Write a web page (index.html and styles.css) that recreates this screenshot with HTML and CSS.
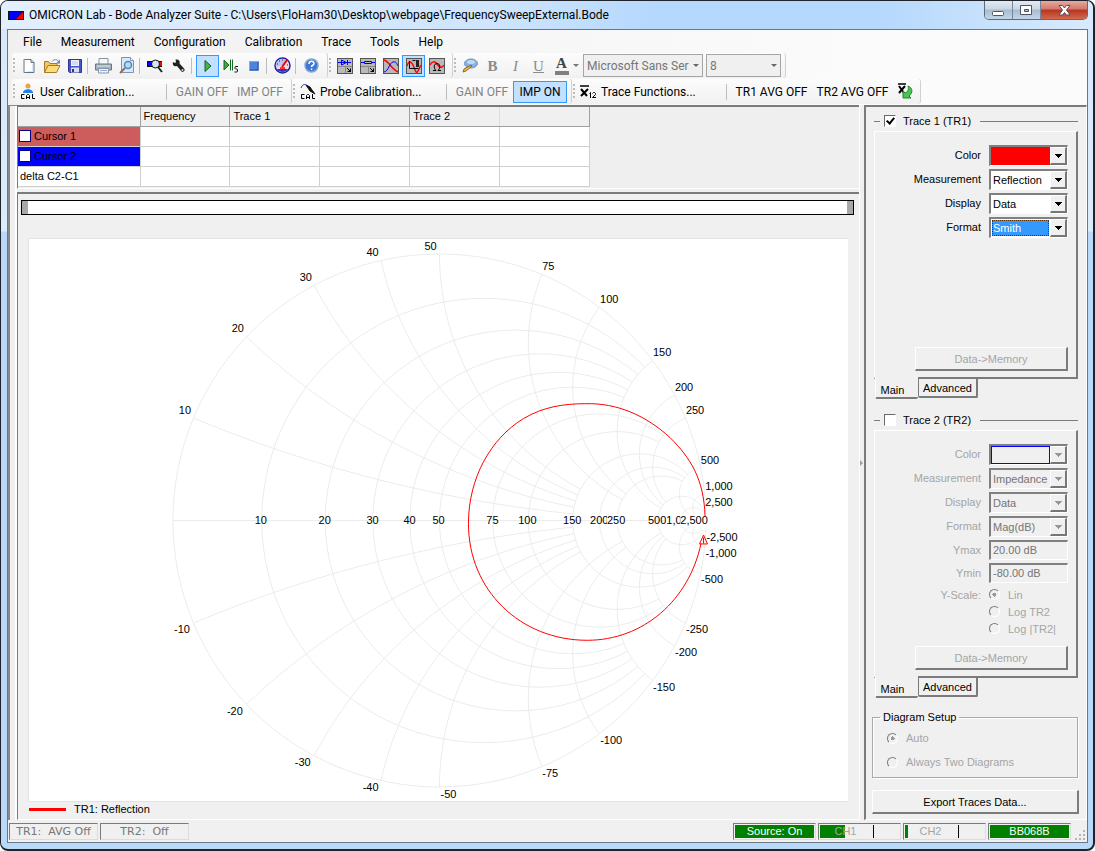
FILE: index.html
```html
<!DOCTYPE html>
<html lang="en">

<head>
    <meta charset="UTF-8">
    <meta name="viewport" content="width=device-width, initial-scale=1.0">
    <title>OMICRON Lab - Bode Analyzer Suite</title>
    <link rel="stylesheet" href="styles.css">
</head>

<body>

    <div class="window">
        <header class="titlebar">
            <svg class="app-icon" width="16" height="9" viewBox="0 0 16 9">
                <rect width="16" height="9" fill="#111"/>
                <path d="M1 1h13L8 8H1z" fill="#00f"/>
                <path d="M15 1v7H8z" fill="#f00"/>
            </svg>
            <h1 class="title">OMICRON Lab - Bode Analyzer Suite - C:\Users\FloHam30\Desktop\webpage\FrequencySweepExternal.Bode</h1>
            <div class="window-buttons">
                <button class="win-btn" aria-label="Minimize">
                    <svg width="13" height="11" viewBox="0 0 13 11"><rect x=".5" y="6.500" width="11" height="4" rx="1" fill="#fff" stroke="#4b5563"/></svg>
                </button>
                <button class="win-btn" aria-label="Maximize">
                    <svg width="13" height="11" viewBox="0 0 13 11"><path d="M.5.5h11v9H.5zM4.500 4.500v2h4v-2z" fill="#fff" fill-rule="evenodd" stroke="#4b5563"/></svg>
                </button>
                <button class="win-btn close" aria-label="Close">
                    <svg width="13" height="11" viewBox="0 0 13 11"><path d="M1 .5h3.500l2 2.500 2-2.500H12L8.500 5l3.500 5H8.500l-2-2.500-2 2.500H1l3.500-5z" fill="#fff" stroke="#5a4a5a"/></svg>
                </button>
            </div>
        </header>

        <div class="client">
            <nav class="menubar">
                <button>File</button>
                <button>Measurement</button>
                <button>Configuration</button>
                <button>Calibration</button>
                <button>Trace</button>
                <button>Tools</button>
                <button>Help</button>
            </nav>

            <div class="toolbar">
                <div class="strip">
                    <button class="tool" aria-label="New"><svg width="16" height="16" viewBox="0 0 16 16"><path d="M3 1.500h7l3 3v10H3z" fill="#fff" stroke="#5d7187"/><path d="M3 1v13.500" stroke="#a9bccb"/><path d="M10 1.500v3h3" fill="#c9dae8" stroke="#5d7187"/><path d="M11.500 6v7.500H6" fill="none" stroke="#dce7ef"/></svg></button>
                    <button class="tool" aria-label="Open"><svg width="18" height="16" viewBox="0 0 18 16"><path d="M1.500 14.500v-11h4l1.500 2h7v4" fill="#f4c75c" stroke="#a9792b"/><path d="M1.500 14.500l3.500-7h12l-3.500 7z" fill="#fbdc7a" stroke="#a9792b"/><path d="M9 3.500c2-2.500 5-2.500 6.500 0" fill="none" stroke="#6482a8"/><path d="M17 1.500v4h-4z" fill="#6482a8"/></svg></button>
                    <button class="tool" aria-label="Save"><svg width="16" height="16" viewBox="0 0 16 16"><path d="M1.500 1.500h13v13h-12l-1-1z" fill="#4655c4" stroke="#30378d"/><rect x="4" y="2" width="8" height="6" fill="#f0f3fd"/><path d="M5 4h6M5 6h6" stroke="#b9c2e3"/><path d="M4 14.500v-5h8v5z" fill="#d8dcef"/><rect x="5" y="11" width="2" height="3" fill="#30378d"/></svg></button>
                    <span class="sep"></span>
                    <button class="tool" aria-label="Print"><svg width="17" height="16" viewBox="0 0 17 16"><path d="M4 6V.5h9V6" fill="#f4f8fc" stroke="#8796a5"/><path d="M.5 6h16v6H.5z" fill="#a5b0ba" stroke="#697783"/><path d="M2 8h13" stroke="#dfe5ea"/><path d="M3.500 10.500h10v4.500h-10z" fill="#eef4fa" stroke="#8796a5"/><path d="M5 12.500h7" stroke="#8fb0d6"/></svg></button>
                    <button class="tool" aria-label="Print preview"><svg width="16" height="17" viewBox="0 0 16 17"><path d="M2.500.5h9l3 3v12h-12z" fill="#d9e9f9" stroke="#7c95b4"/><path d="M11.500.5v3h3" fill="#fff" stroke="#7c95b4"/><circle cx="9" cy="8" r="3.500" fill="#b5dcf6" stroke="#5588bc" stroke-width="1.500"/><path d="M6 11l-5 5" stroke="#976f4e" stroke-width="2"/></svg></button>
                    <span class="sep"></span>
                    <button class="tool" aria-label="Search device"><svg width="17" height="15" viewBox="0 0 17 15"><rect x="0" y="3" width="15" height="6" fill="#111"/><rect x="1" y="4" width="4" height="4" fill="#00f"/><rect x="12" y="4" width="3" height="4" fill="#f00"/><circle cx="8.500" cy="6" r="4" fill="#d5e7f2" stroke="#111"/><path d="M11 9l4 5" stroke="#222" stroke-width="2"/></svg></button>
                    <button class="tool" aria-label="Settings"><svg width="14" height="14" viewBox="0 0 14 14"><path d="M1 3l2 1 1-1-.500-2.500c3-.500 5 1.500 4 4l5 5.500c.500 2-1 3.500-3 2.500L5 7C2 8 0 6 1 3z" fill="#222"/><circle cx="10.500" cy="11" r="1" fill="#ddd"/></svg></button>
                    <span class="sep"></span>
                    <button class="tool active" aria-label="Continuous measurement"><svg width="12" height="14" viewBox="0 0 12 14"><path d="M3 1.500l6 5.500-6 5.500z" fill="#4cb04c" stroke="#12641d"/></svg></button>
                    <button class="tool" aria-label="Single measurement"><svg width="16" height="16" viewBox="0 0 16 16"><path d="M1 2l5 5-5 5z" fill="#3fa648" stroke="#166a20"/><path d="M7.500 1.500v11M9.500 1.500v11" stroke="#166a20"/><path d="M15 8.500h-2.500l-.5.500v1.500l.5.500h1.500l.5.500v2l-.5.500h-2.500" fill="none" stroke="#111"/></svg></button>
                    <button class="tool" aria-label="Stop"><svg width="10" height="10" viewBox="0 0 10 10"><rect x=".5" y=".5" width="9" height="9" fill="#4b84dc" stroke="#8aa9d8"/><path d="M1 9h8V1" fill="none" stroke="#24509e"/></svg></button>
                    <span class="sep"></span>
                    <button class="tool" aria-label="Signal level"><svg width="17" height="17" viewBox="0 0 17 17"><circle cx="8.500" cy="8.500" r="7.500" fill="#fbd5da" stroke="#2020a0" stroke-width="1.500"/><path d="M2 10a6.500 6.500 0 0 1 10-7l-3 5z" fill="#b9c5f8"/><path d="M3 12h11a6.500 6.500 0 0 1-11 0z" fill="#2838c0"/><path d="M8 10l5-7" stroke="#e00" stroke-width="2"/><path d="M3 7h1M5 4h1M8 3h1M14 8h-1" stroke="#222"/><path d="M6 11h5" stroke="#f33" stroke-width="2"/></svg></button>
                    <span class="sep"></span>
                    <button class="tool" aria-label="Help"><svg width="15" height="15" viewBox="0 0 15 15"><circle cx="7.500" cy="7.500" r="6.500" fill="#3d78d4" stroke="#8ca5cf" stroke-width="1.500"/><path d="M5 6c0-3.500 5-3.500 5-.500 0 2-2.500 1.500-2.500 3.500M7.500 10.500v1.500" fill="none" stroke="#fff" stroke-width="1.500"/></svg></button>
                </div>
                <div class="strip">
                    <button class="tool" aria-label="Gain phase"><svg width="16" height="16" viewBox="0 0 16 16"><rect x=".5" y=".5" width="15" height="15" fill="#b9b9b9" stroke="#555"/><path d="M1 8.500h14M8.500 9v6" fill="none" stroke="#888"/><path d="M1 4.500h13M4.500 2v5l5-2.500zM10.500 2v5" fill="none" stroke="#00f"/><path d="M10 10l4 4M13.500 10.500v3h-3" fill="none" stroke="#000"/></svg></button>
                    <button class="tool" aria-label="Impedance"><svg width="16" height="16" viewBox="0 0 16 16"><rect x=".5" y=".5" width="15" height="15" fill="#b9b9b9" stroke="#555"/><path d="M1 8.500h14M8.500 9v6" fill="none" stroke="#888"/><path d="M1 4.500h3M12 4.500h3M4.500 3.500h7v2h-7z" fill="none" stroke="#00f"/><path d="M10 10l4 4M13.500 10.500v3h-3" fill="none" stroke="#000"/></svg></button>
                    <button class="tool" aria-label="Frequency sweep"><svg width="16" height="16" viewBox="0 0 16 16"><rect x=".5" y=".5" width="15" height="15" fill="#b9b9b9" stroke="#555"/><path d="M1 2c5 1 7 9 14 12" fill="none" stroke="#f00" stroke-width="1.500"/><path d="M1 14c5-1 5-9 9-10s4 3 5 4" fill="none" stroke="#00f"/></svg></button>
                    <button class="tool active" aria-label="External sweep"><svg width="16" height="16" viewBox="0 0 16 16"><rect x=".5" y=".5" width="15" height="15" fill="#b9b9b9" stroke="#555"/><path d="M1 8c2-6 4-5 6-1s3 10 5 6l3-6" fill="none" stroke="#f00" stroke-width="1.500"/><path d="M3.500 3v7.500h9M6.500 2.500h3" fill="none" stroke="#000"/><rect x="10" y="2" width="3" height="7" fill="#222"/></svg></button>
                    <button class="tool" aria-label="Frequency sweep mode"><svg width="16" height="16" viewBox="0 0 16 16"><rect x=".5" y=".5" width="15" height="15" fill="#b9b9b9" stroke="#555"/><path d="M1 7c2-4 5-4 7-1s5 5 7 1" fill="none" stroke="#f00" stroke-width="1.500"/><path d="M4 12.500h3c-3-3-2-7 1-7s4 4 1 7h3" fill="none" stroke="#000"/></svg></button>
                </div>
                <div class="strip">
                    <button class="tool" aria-label="Chart style"><svg width="16" height="15" viewBox="0 0 16 15"><ellipse cx="9" cy="5.500" rx="6.500" ry="4.500" fill="#86b0e2" stroke="#6f91bd"/><ellipse cx="9" cy="4" rx="4" ry="2" fill="#bddaf5"/><path d="M1 14l1-3 7-4 1 1-6 5z" fill="#e5b94c" stroke="#8e692a"/></svg></button>
                    <button class="tool font-b" disabled>B</button>
                    <button class="tool font-i" disabled>I</button>
                    <button class="tool font-u" disabled>U</button>
                    <button class="tool font-a" aria-label="Font color"><span>A</span></button>
                    <span class="drop"></span>
                    <span class="tool-combo font-name"><select aria-label="Font" disabled><option>Microsoft Sans Ser</option></select></span>
                    <span class="tool-combo font-size"><select aria-label="Font size" disabled><option>8</option></select></span>
                </div>
            </div>

            <div class="toolbar">
                <div class="strip">
                    <button class="cal-btn"><svg width="16" height="17" viewBox="0 0 16 17"><circle cx="8" cy="3" r="2.500" fill="#e8a44c"/><path d="M3 10c0-5 10-5 10 0z" fill="#1684e8"/><path d="M4.500 11.500h-3v4h3M6.500 16v-3.500l1-1h1l1 1V16M7 14.500h2M12.500 11v4.500H15" fill="none" stroke="#000"/></svg>User Calibration...</button>
                    <span class="sep"></span>
                    <button class="text-btn wide" disabled>GAIN OFF</button>
                    <button class="text-btn" disabled>IMP OFF</button>
                </div>
                <div class="strip">
                    <button class="cal-btn"><svg width="16" height="17" viewBox="0 0 16 17"><path d="M1 5c2-5 5-4 7-1" fill="none" stroke="#22c"/><path d="M6 2l4 2 2 3 3 4-5-3-2-3z" fill="#111" stroke="#111"/><path d="M4.500 11.500h-3v4h3M6.500 16v-3.500l1-1h1l1 1V16M7 14.500h2M12.500 11v4.500H15" fill="none" stroke="#000"/></svg>Probe Calibration...</button>
                    <span class="sep"></span>
                    <button class="text-btn wide" disabled>GAIN OFF</button>
                    <button class="text-btn active">IMP ON</button>
                </div>
                <div class="strip">
                    <button class="cal-btn"><svg width="17" height="14" viewBox="0 0 17 14"><path d="M0 1h9" stroke="#000" stroke-width="1.500"/><path d="M1 4l6 7M8 4l-7 7" stroke="#000" stroke-width="2"/><path d="M9.500 8.500l1-1V13M12.500 8.500l1-1h1l1 1v1l-3 3h3.500" fill="none" stroke="#000"/></svg>Trace Functions...</button>
                    <span class="sep"></span>
                    <button class="text-btn avg">TR1 AVG OFF</button>
                    <button class="text-btn avg">TR2 AVG OFF</button>
                    <button class="tool" aria-label="Reset average"><svg width="16" height="17" viewBox="0 0 16 17"><path d="M1 1h8" stroke="#000" stroke-width="1.500"/><path d="M2 3l5 7M8 3l-6 7" stroke="#000" stroke-width="2"/><path d="M11 3c5 2 5 7 1 10l2 2H6V8l2 2c3-1 4-4 3-7z" fill="#4fc34f" stroke="#198a2a"/></svg></button>
                </div>
            </div>

            <div class="workspace">
                <div class="left-rail"></div>

                <main class="center">
                    <div class="cursor-area">
                        <table class="cursor-table">
                            <thead>
                                <tr><th class="name"></th><th>Frequency</th><th>Trace 1</th><th></th><th>Trace 2</th><th></th></tr>
                            </thead>
                            <tbody>
                                <tr><td class="cursor1"><label><input type="checkbox">Cursor 1</label></td><td></td><td></td><td></td><td></td><td></td></tr>
                                <tr><td class="cursor2"><label><input type="checkbox">Cursor 2</label></td><td></td><td></td><td></td><td></td><td></td></tr>
                                <tr><td>delta C2-C1</td><td></td><td></td><td></td><td></td><td></td></tr>
                            </tbody>
                        </table>
                    </div>

                    <div class="diagram">
                        <div class="zoom-bar"></div>
                        <svg class="smith" id="smith" viewBox="0 0 818 563">
                            <g id="grid"></g>
                            <g id="labels"></g>
                            <path class="curve" d="M676 278C675 240 661 219 641 199C617 177 588 164 556 165C535 165 514 168 494 180C461 200 439 240 439 285C439 352 491 402 558 402C614 402 660 362 672 305"/>
                            <path class="curve" d="M674.500 296.500l-4 9h8zM674.500 299v6"/>
                        </svg>
                        <div class="legend"><span class="legend-line"></span>TR1: Reflection</div>
                    </div>
                </main>

                <div class="splitter"></div>

                <aside class="side">
                    <section class="trace">
                        <label class="trace-head"><input type="checkbox" checked><span>Trace 1 (TR1)</span></label>
                        <div class="page">
                            <div class="row"><label for="color1">Color</label><span class="combo color1"><select id="color1"><option></option></select></span></div>
                            <div class="row"><label for="meas1">Measurement</label><span class="combo"><select id="meas1"><option>Reflection</option></select></span></div>
                            <div class="row"><label for="disp1">Display</label><span class="combo"><select id="disp1"><option>Data</option></select></span></div>
                            <div class="row"><label for="form1">Format</label><span class="combo focused"><select id="form1"><option>Smith</option></select></span></div>
                            <button class="push" disabled>Data-&gt;Memory</button>
                        </div>
                        <div class="tabs"><button class="tab current">Main</button><button class="tab">Advanced</button></div>
                    </section>

                    <section class="trace">
                        <label class="trace-head"><input type="checkbox"><span>Trace 2 (TR2)</span></label>
                        <div class="page off">
                            <div class="row"><label for="color2">Color</label><span class="combo color2"><select id="color2" disabled><option></option></select></span></div>
                            <div class="row"><label for="meas2">Measurement</label><span class="combo"><select id="meas2" disabled><option>Impedance</option></select></span></div>
                            <div class="row"><label for="disp2">Display</label><span class="combo"><select id="disp2" disabled><option>Data</option></select></span></div>
                            <div class="row"><label for="form2">Format</label><span class="combo"><select id="form2" disabled><option>Mag(dB)</option></select></span></div>
                            <div class="row"><label for="ymax">Ymax</label><input class="field" id="ymax" value="20.00 dB" disabled></div>
                            <div class="row"><label for="ymin">Ymin</label><input class="field" id="ymin" value="-80.00 dB" disabled></div>
                            <div class="row scale">
                                <span class="scale-name">Y-Scale:</span>
                                <div class="radios">
                                    <label><input type="radio" name="scale" checked disabled>Lin</label>
                                    <label><input type="radio" name="scale" disabled>Log TR2</label>
                                    <label><input type="radio" name="scale" disabled>Log |TR2|</label>
                                </div>
                            </div>
                            <button class="push" disabled>Data-&gt;Memory</button>
                        </div>
                        <div class="tabs"><button class="tab current">Main</button><button class="tab">Advanced</button></div>
                    </section>

                    <fieldset class="setup">
                        <legend>Diagram Setup</legend>
                        <label><input type="radio" name="setup" checked disabled>Auto</label>
                        <label><input type="radio" name="setup" disabled>Always Two Diagrams</label>
                    </fieldset>

                    <button class="push export">Export Traces Data...</button>
                </aside>
            </div>

            <footer class="statusbar">
                <span class="cell">TR1:&nbsp; AVG Off</span>
                <span class="cell">TR2:&nbsp; Off</span>
                <span class="spacer"></span>
                <span class="cell led">Source: On</span>
                <span class="cell level ch1">CH1</span>
                <span class="cell level ch2">CH2</span>
                <span class="cell led">BB068B</span>
                <svg class="grip" width="12" height="12" viewBox="0 0 12 12"><path d="M8 0h2v2H8zM8 4h2v2H8zM4 4h2v2H4zM8 8h2v2H8zM4 8h2v2H4zM0 8h2v2H0z" fill="#b4b4b4"/></svg>
            </footer>
        </div>
    </div>

    <script>
        const NS = 'http://www.w3.org/2000/svg';
        const cx = 410, cy = 282, R = 267, Z0 = 50;

        // [ohms, value at which the line stops]
        const lines = [
            [10, 150], [20, 150], [30, 150], [40, 150], [50, 150],
            [75, 250], [100, 250],
            [150, 500], [200, 500], [250, 500],
            [500, 2500], [1000, 2500], [2500, 10000]
        ];

        function point(r, x) {
            const d = (r + 1) * (r + 1) + x * x;
            return (cx + R * (r * r - 1 + x * x) / d).toFixed(1) + ' ' + (cy - R * 2 * x / d).toFixed(1);
        }

        function addPath(points) {
            const path = document.createElementNS(NS, 'path');
            path.setAttribute('d', 'M' + points.join('L'));
            document.getElementById('grid').appendChild(path);
        }

        lines.forEach(([value, stop]) => {
            const v = value / Z0, s = stop / Z0, steps = 60;

            // constant resistance
            const end = Math.atan(s / (1 + v));
            const circle = [];
            for (let i = -steps; i <= steps; i++) {
                circle.push(point(v, (1 + v) * Math.tan(end * i / steps)));
            }
            addPath(circle);

            // constant reactance, upper and lower
            const a = Math.atan(1 / v), b = Math.atan((s + 1) / v);
            [1, -1].forEach(sign => {
                const arc = [];
                for (let i = 0; i <= steps; i++) {
                    const r = v * Math.tan(a + (b - a) * i / steps) - 1;
                    arc.push(point(Math.max(r, 0), sign * v));
                }
                addPath(arc);
            });
        });

        const outer = document.createElementNS(NS, 'circle');
        outer.setAttribute('cx', cx);
        outer.setAttribute('cy', cy);
        outer.setAttribute('r', R);
        document.getElementById('grid').appendChild(outer);
        addPath([point(0, 0), (cx + R) + ' ' + cy]);

        // [text, x, y, hides the label to its left]
        const labels = [
            ['10', 155, 175], ['20', 208, 93], ['30', 276, 42], ['40', 343, 17], ['50', 401, 11],
            ['75', 519, 31], ['100', 580, 64], ['150', 633, 117], ['200', 655, 152], ['250', 666, 175],
            ['500', 681, 225], ['1,000', 690, 251], ['2,500', 690, 267],
            ['10', 231, 286], ['20', 295, 286], ['30', 343, 286], ['40', 380, 286], ['50', 409, 286],
            ['75', 463, 286], ['100', 498, 286], ['150', 543, 286], ['200', 570, 286], ['250', 587, 286, true],
            ['500', 628, 286], ['1,000', 651, 286, true], ['2,500', 665, 286, true],
            ['-10', 152, 395], ['-20', 205, 477], ['-30', 273, 528], ['-40', 341, 553], ['-50', 419, 560],
            ['-75', 521, 539], ['-100', 582, 506], ['-150', 635, 453], ['-200', 657, 418], ['-250', 668, 395],
            ['-500', 683, 345], ['-1,000', 692, 319], ['-2,500', 693, 303]
        ];

        labels.forEach(([value, x, y, cover]) => {
            const group = document.getElementById('labels');
            const text = document.createElementNS(NS, 'text');
            text.setAttribute('x', x);
            text.setAttribute('y', y);
            text.textContent = value;
            group.appendChild(text);

            if (cover) {
                const box = text.getBBox();
                const rect = document.createElementNS(NS, 'rect');
                rect.setAttribute('x', box.x);
                rect.setAttribute('y', box.y);
                rect.setAttribute('width', box.width);
                rect.setAttribute('height', box.height);
                group.insertBefore(rect, text);
            }
        });
    </script>

</body>

</html>
```
FILE: styles.css
```css
*, *::before, *::after {
    box-sizing: border-box;
}

body {
    margin: 0;
    background: #fff;
    font-family: 'Liberation Sans', Arial, sans-serif;
    font-size: 11px;
    line-height: 14px;
    color: #000;
}

button, select, input {
    font: inherit;
    color: inherit;
    margin: 0;
    padding: 0;
}

button {
    border: none;
    background: none;
    white-space: nowrap;
}

/* window frame */
.window {
    display: flex;
    flex-direction: column;
    height: 100vh;
    min-height: 760px;
    padding: 0 5px 6px 6px;
    border: 1px solid #20242a;
    border-width: 1px 2px 2px 1px;
    border-radius: 8px;
    background: linear-gradient(#d5e8fb 0, #dcecfc 230px, #b9d9fb 231px);
}

.titlebar {
    display: flex;
    align-items: flex-start;
    height: 28px;
    margin: 0 -5px 0 -6px;
    padding: 0 5px 0 6px;
    border-radius: 7px 7px 0 0;
    background: linear-gradient(90deg, #e2effd 0, #cfe5fd 45%, #b5d8fd 60%, #b5d8fd 80%, #d9eafc 100%);
}

.app-icon {
    margin: 10px 5px 0 1px;
}

.title {
    flex: 1;
    min-width: 0;
    margin: 0;
    padding-top: 5px;
    overflow: hidden;
    white-space: nowrap;
    font: 12px/18px Roboto, 'Open Sans', sans-serif;
}

.window-buttons {
    display: flex;
    border: 1px solid #596b80;
    border-top: none;
    border-radius: 0 0 5px 5px;
    overflow: hidden;
}

.win-btn {
    display: flex;
    align-items: center;
    justify-content: center;
    width: 28px;
    height: 18px;
    border-right: 1px solid #75879b;
    background: linear-gradient(#e2ebf5 0, #c9d6e4 45%, #aabbce 50%, #c3d5e8 100%);
}

.win-btn.close {
    width: 46px;
    border-right: none;
    background: linear-gradient(#e5aaa0 0, #d27869 45%, #b8341e 50%, #d2694c 100%);
}

.client {
    display: flex;
    flex: 1;
    flex-direction: column;
    min-height: 0;
    border: 1px solid #6b7784;
    background: #f0f0f0;
}

/* menu and toolbars */
.menubar {
    display: flex;
    gap: 1px;
    height: 23px;
    padding-left: 6px;
    background: linear-gradient(90deg, #f0f0f0, #fbfbfb 80%);
}

.menubar button, .cal-btn, .text-btn, .tool-combo {
    font: 12px/16px Roboto, 'Open Sans', sans-serif;
}

.menubar button {
    padding: 0 9px;
}

.toolbar {
    display: flex;
    height: 26px;
    padding-left: 4px;
    background: linear-gradient(90deg, #f0f0f0, #fbfbfb 80%);
}

.strip {
    display: flex;
    align-items: center;
    height: 25px;
    padding-right: 4px;
    border-right: 1px solid #d0d0d0;
    border-radius: 3px;
    background: linear-gradient(#fcfcfc, #f1f1f1);
}

.strip::before {
    content: '';
    flex: none;
    width: 2px;
    height: 16px;
    margin: 0 2px 0 1px;
    background: repeating-linear-gradient(#bcbcbc 0, #bcbcbc 2px, transparent 2px, transparent 4px);
}

.sep {
    flex: none;
    width: 5px;
    height: 16px;
    border-left: 1px solid #bdbdbd;
    margin-left: 1px;
}

.tool {
    display: flex;
    flex: none;
    align-items: center;
    justify-content: center;
    width: 23px;
    height: 22px;
}

.tool.active, .text-btn.active {
    border: 1px solid #3399ff;
    background: #c2e0ff;
}

.font-b, .font-i, .font-u, .font-a {
    font: 15px/20px 'Liberation Serif', serif;
    color: #8b8b8b;
}

.font-b {
    font-weight: bold;
}

.font-i {
    font-style: italic;
}

.font-u {
    text-decoration: underline;
}

.font-a span {
    width: 14px;
    border-bottom: 4px solid #808080;
    line-height: 15px;
    font-weight: bold;
    color: #444;
}

.drop {
    width: 6px;
    margin-right: 4px;
    border: 3px solid transparent;
    border-top-color: #777;
    border-bottom: none;
}

.tool-combo {
    position: relative;
    height: 23px;
    margin-right: 3px;
}

.tool-combo select {
    appearance: none;
    display: block;
    width: 100%;
    height: 100%;
    padding-left: 3px;
    border: 1px solid #a5a5a5;
    border-radius: 0;
    background: #f0f0f0;
    color: #757575;
    opacity: 1;
}

.tool-combo::after {
    content: '';
    position: absolute;
    top: 10px;
    right: 4px;
    border: 3px solid transparent;
    border-top-color: #666;
    border-bottom: none;
}

.font-name {
    width: 120px;
}

.font-size {
    width: 75px;
    margin-right: 0;
}

.cal-btn {
    display: flex;
    align-items: center;
    gap: 4px;
    width: 148px;
    height: 22px;
    padding-left: 3px;
}

.text-btn {
    width: 54px;
    height: 22px;
}

.text-btn.wide {
    width: 62px;
}

.text-btn.avg {
    width: 81px;
}

.text-btn:disabled {
    color: #838383;
}

/* main area */
.workspace {
    display: flex;
    flex: 1;
    min-height: 0;
}

.left-rail {
    width: 9px;
    border-top: 1px solid #8a8a8a;
    border-left: 2px solid #8a8a8a;
    background: linear-gradient(90deg, #f0f0f0 5px, #fff 5px);
}

.center {
    display: flex;
    flex: 1;
    flex-direction: column;
    min-width: 0;
}

.cursor-area {
    height: 84px;
    border-top: 2px solid #7b7b7b;
    border-left: 1px solid #7b7b7b;
    border-bottom: 1px solid #fff;
    background: #f0efef;
}

.cursor-table {
    border-collapse: collapse;
    table-layout: fixed;
    width: 572px;
    background: #fff;
}

.cursor-table th, .cursor-table td {
    height: 20px;
    padding: 0 2px;
    border-right: 1px solid #d0d0d0;
    border-bottom: 1px solid #d0d0d0;
    text-align: left;
    font-weight: normal;
}

.cursor-table th {
    height: 19px;
    border-right-color: #a0a0a0;
    border-bottom-color: #a0a0a0;
    padding-left: 3px;
    background: #f0f0f0;
}

.cursor-table th.name {
    width: 122px;
}

.cursor-table th:nth-child(3), .cursor-table th:nth-child(5) {
    border-right-color: #dedede;
}

.cursor-table label {
    display: flex;
    align-items: center;
    gap: 3px;
}

.cursor-table input {
    appearance: none;
    width: 12px;
    height: 12px;
    border: 1px solid #000080;
    background: #fff;
}

.cursor-table .cursor1, .cursor-table .cursor2 {
    padding-left: 1px;
}

.cursor-table .cursor1 {
    background: #cd5c5c;
}

.cursor-table .cursor2 {
    background: #00f;
}

.diagram {
    display: flex;
    flex: 1;
    flex-direction: column;
    min-height: 0;
    margin-top: 3px;
    padding: 6px 5px 0 3px;
    border-top: 2px solid #7b7b7b;
    border-left: 1px solid #7b7b7b;
    border-bottom: 1px solid #fff;
}

.zoom-bar {
    flex: none;
    height: 15px;
    border: 1px solid #000;
    background: linear-gradient(#a8a8a8, #a8a8a8) left / 6px 100% no-repeat, linear-gradient(#a8a8a8, #a8a8a8) right / 6px 100% no-repeat, #fff;
}

.smith {
    flex: 1;
    min-height: 0;
    margin: 23px 6px 0 7px;
    border: 1px solid #e2e2e2;
    border-width: 1px 0 1px 1px;
    background: #fff;
}

.smith #grid {
    fill: none;
    stroke: #ebebeb;
}

.smith text {
    text-anchor: middle;
    font-size: 11px;
}

.smith rect {
    fill: #fff;
}

.curve {
    fill: none;
    stroke: #f00;
}

.legend {
    display: flex;
    align-items: center;
    gap: 8px;
    height: 17px;
    margin-left: 8px;
    padding-bottom: 3px;
}

.legend-line {
    width: 37px;
    height: 3px;
    background: #f00;
}

/* thin bar with a small collapse arrow */
.splitter {
    display: flex;
    align-items: center;
    width: 5px;
    background: linear-gradient(90deg, #fff 1px, #f0f0f0 1px);
}

.splitter::before {
    content: '';
    margin-left: 1px;
    border: 3px solid transparent;
    border-left-color: #a0a0a0;
    border-right: none;
}

/* right panel */
.side {
    flex: none;
    width: 223px;
    padding: 5px 7px 0 6px;
    border-top: 2px solid #7b7b7b;
    border-left: 2px solid #7b7b7b;
    border-bottom: 1px solid #fff;
    border-right: 1px solid #fff;
}

.trace {
    margin: 0 1px 12px 2px;
}

.trace-head {
    display: flex;
    align-items: center;
    height: 18px;
}

.trace-head::before, .trace-head::after {
    content: '';
    width: 6px;
    height: 1px;
    background: #7b7b7b;
}

.trace-head::after {
    flex: 1;
}

.trace-head input {
    appearance: none;
    width: 12px;
    height: 12px;
    margin: 0 7px 0 4px;
    border: 1px solid #fff;
    border-top-color: #696969;
    border-left-color: #696969;
    background: #fff;
}

.trace-head input:checked::before {
    content: '';
    display: block;
    width: 5px;
    height: 8px;
    margin: 0 3px;
    border: solid #000;
    border-width: 0 2px 2px 0;
    transform: rotate(40deg);
}

.trace-head span {
    margin-right: 9px;
}

.page {
    display: flex;
    flex-direction: column;
    height: 248px;
    margin-top: 1px;
    padding: 11px 8px 6px;
    border: 1px solid #fff;
    border-right: 2px solid #7b7b7b;
    border-bottom: 2px solid #7b7b7b;
}

.row {
    display: flex;
    flex: none;
    align-items: center;
    justify-content: flex-end;
    gap: 8px;
    height: 24px;
}

.off .row, .setup label {
    color: #a5a5a5;
}

.combo {
    position: relative;
    width: 79px;
    height: 21px;
}

.combo select, .field {
    appearance: none;
    display: block;
    width: 79px;
    height: 21px;
    padding: 0 18px 0 2px;
    border: 1px solid #fff;
    border-top: 2px solid #808080;
    border-left: 2px solid #808080;
    border-radius: 0;
    background: #fff;
    opacity: 1;
}

.field {
    height: 20px;
    padding-right: 0;
}

.combo select:disabled, .field:disabled {
    background: #f0f0f0;
    color: #757575;
}

.combo::after {
    content: '';
    position: absolute;
    top: 2px;
    right: 1px;
    width: 17px;
    height: 18px;
    border: 1px solid #fff;
    border-right: 2px solid #777;
    border-bottom: 2px solid #777;
    background: linear-gradient(#000, #000) 4px 6px / 7px 1px no-repeat, linear-gradient(#000, #000) 5px 7px / 5px 1px no-repeat, linear-gradient(#000, #000) 6px 8px / 3px 1px no-repeat, linear-gradient(#000, #000) 7px 9px / 1px 1px no-repeat, #f0f0f0;
    pointer-events: none;
}

.off .combo::after {
    background: linear-gradient(#999, #999) 4px 6px / 7px 1px no-repeat, linear-gradient(#999, #999) 5px 7px / 5px 1px no-repeat, linear-gradient(#999, #999) 6px 8px / 3px 1px no-repeat, linear-gradient(#999, #999) 7px 9px / 1px 1px no-repeat, #f0f0f0;
}

.color1 select {
    background: #f00;
}

.color2 select:disabled {
    background: linear-gradient(#f0f0f0, #f0f0f0) 1px 1px / 57px 16px no-repeat, linear-gradient(#00f, #00f) 0 0 / 59px 18px no-repeat;
}

.focused select {
    background: linear-gradient(#3399ff, #3399ff) 1px 1px / 57px 16px no-repeat, #fff;
    color: #fff;
}

.focused::before {
    content: '';
    position: absolute;
    top: 3px;
    left: 3px;
    width: 57px;
    height: 16px;
    border: 1px dotted #5b2b00;
    pointer-events: none;
}

.off .row:nth-child(5), .off .row:nth-child(6) {
    height: 23px;
}

.off .row.scale {
    align-items: flex-start;
    height: auto;
    margin-top: 2px;
}

.scale-name {
    padding-top: 2px;
}

.radios {
    width: 79px;
}

.radios label {
    display: flex;
    align-items: center;
    gap: 8px;
    height: 17px;
}

input[type="radio"] {
    appearance: none;
    width: 11px;
    height: 11px;
    border: 1px solid #fff;
    border-top-color: #7b7b7b;
    border-left-color: #7b7b7b;
    border-radius: 50%;
}

input[type="radio"]:checked {
    background: radial-gradient(circle, #999 2px, transparent 2px);
}

.push {
    height: 24px;
    border: 1px solid #fff;
    border-right: 2px solid #7b7b7b;
    border-bottom: 2px solid #7b7b7b;
    background: #f0f0f0;
}

.push:disabled {
    color: #a5a5a5;
}

.page .push {
    align-self: flex-end;
    width: 153px;
    margin-top: auto;
}

.tabs {
    display: flex;
    align-items: flex-start;
    padding-left: 1px;
}

.tab {
    height: 19px;
    padding: 0 4px;
    border: 1px solid #7b7b7b;
    border-top: none;
    border-right-width: 2px;
    border-bottom-width: 2px;
    border-radius: 0 0 2px 2px;
}

.tab.current {
    width: 43px;
    height: 22px;
    margin-top: -2px;
    padding: 6px 9px 0 0;
    border: none;
    border-left: 1px solid #fff;
    border-bottom: 2px solid #7b7b7b;
    background: #f0f0f0;
}

.setup {
    margin: 0 1px 0 0;
    padding: 2px 14px 4px;
    height: 68px;
    border: 1px solid #a9a9a9;
    box-shadow: inset 1px 1px #fff, 1px 1px #fff;
}

.setup legend {
    margin-left: -7px;
    padding: 0 3px;
}

.setup label {
    display: flex;
    align-items: center;
    gap: 8px;
    height: 24px;
}

.export {
    width: 100%;
    margin-top: 12px;
}

/* status bar */
.statusbar {
    display: flex;
    align-items: center;
    gap: 2px;
    height: 22px;
    padding: 1px 0 0 1px;
    color: #777;
}

.cell {
    width: 83px;
    height: 17px;
    border: 1px solid #dcdcdc;
    border-top-color: #7b7b7b;
    border-left-color: #7b7b7b;
    text-align: center;
    line-height: 15px;
}

.statusbar .cell:nth-child(-n+2) {
    width: 89px;
    font: 11px/15px 'DejaVu Sans', sans-serif;
}

.spacer {
    flex: 1;
}

.led {
    padding: 1px;
    background: #008000 content-box;
    color: #fff;
    line-height: 13px;
}

.level {
    padding-right: 28px;
    color: #a5a5a5;
}

.ch1 {
    background: linear-gradient(#008000, #008000) 1px 1px / 25px 13px no-repeat, linear-gradient(#000, #000) 54px 1px / 1px 13px no-repeat;
}

.ch2 {
    background: linear-gradient(#008000, #008000) 1px 1px / 3px 13px no-repeat, linear-gradient(#000, #000) 54px 1px / 1px 13px no-repeat;
}

.grip {
    align-self: flex-end;
    margin-left: 2px;
}
```
